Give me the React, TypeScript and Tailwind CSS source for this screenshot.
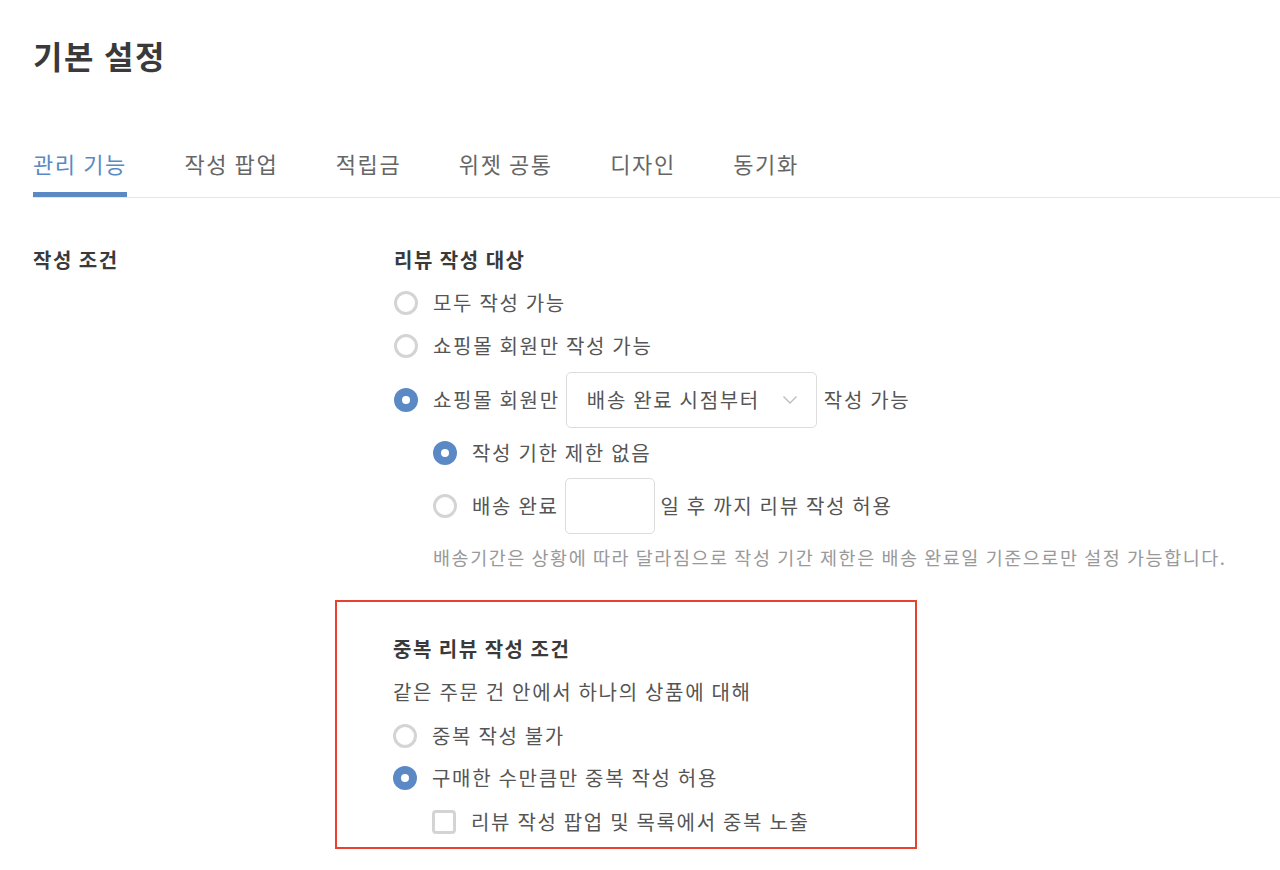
import React from "react";

const F = { fontFamily: '"Noto Sans CJK KR", "Noto Sans", sans-serif' };

function Radio({ checked }: { checked?: boolean }) {
  return checked ? (
    <span className="flex h-6 w-6 shrink-0 items-center justify-center rounded-full bg-[#5b89c6]">
      <span className="h-2 w-2 rounded-full bg-white" />
    </span>
  ) : (
    <span className="h-6 w-6 shrink-0 rounded-full border-[3px] border-[#d4d4d4] bg-white" />
  );
}

function Row({ checked, children, className = "" }: { checked?: boolean; children: React.ReactNode; className?: string }) {
  return (
    <div className={`flex items-center gap-[15px] ${className}`}>
      <Radio checked={checked} />
      <div className="flex items-center text-[20px] leading-[30px] tracking-[1.7px] text-[#555]">{children}</div>
    </div>
  );
}

export default function App() {
  const tabs = ["관리 기능", "작성 팝업", "적립금", "위젯 공통", "디자인", "동기화"];
  return (
    <div className="min-h-[870px] w-[1280px] bg-white pl-[33px]" style={F}>
      <h1 className="pt-[33px] text-[32px] font-bold leading-[44px] tracking-[1.6px] text-[#3a3a3a]">기본 설정</h1>

      <div className="mt-[71px] flex gap-[57.5px] border-b border-[#e6e6e6]">
        {tabs.map((t, i) => (
          <div
            key={t}
            className={`border-b-[5px] pb-[14px] text-[22px] leading-[30px] tracking-[1.6px] ${
              i === 0 ? "border-[#5b89c6] text-[#5b89c6]" : "border-transparent text-[#666]"
            }`}
          >
            {t}
          </div>
        ))}
      </div>

      <div className="mt-[47px] flex">
        <div className="w-[361px] shrink-0 text-[20px] font-bold leading-[30px] tracking-[1.5px] text-[#3a3a3a]">작성 조건</div>
        <div className="flex flex-col">
          <div className="text-[20px] font-bold leading-[30px] tracking-[1.5px] text-[#3a3a3a]">리뷰 작성 대상</div>
          <Row className="mt-[13px]">모두 작성 가능</Row>
          <Row className="mt-[13px]">쇼핑몰 회원만 작성 가능</Row>
          <Row checked className="mt-[11px]">
            <span>쇼핑몰 회원만</span>
            <div className="ml-[6px] mr-[7px] flex h-[56px] w-[251px] items-center justify-between rounded-[5px] border border-[#dcdcdc] pl-[20px] pr-[18px] text-[#555]">
              <span>배송 완료 시점부터</span>
              <svg width="16" height="10" viewBox="0 0 16 10" fill="none">
                <path d="M1.5 1.5 L8 8 L14.5 1.5" stroke="#bdbdbd" strokeWidth="1.4" />
              </svg>
            </div>
            <span>작성 가능</span>
          </Row>
          <div className="ml-[39px] flex flex-col">
            <Row checked className="mt-[10px]">작성 기한 제한 없음</Row>
            <Row className="mt-[10px]">
              <span>배송 완료</span>
              <div className="ml-[6px] mr-[6px] h-[56px] w-[90px] rounded-[5px] border border-[#dcdcdc]" />
              <span>일 후 까지 리뷰 작성 허용</span>
            </Row>
            <p className="mt-[10px] whitespace-nowrap text-[18.5px] leading-[26px] tracking-[1.55px] text-[#999]">
              배송기간은 상황에 따라 달라짐으로 작성 기간 제한은 배송 완료일 기준으로만 설정 가능합니다.
            </p>
          </div>

          <div className="-ml-[59px] mt-[30px] w-[582px] border-[2.5px] border-[#e9412f] pb-[10px] pl-[56px] pt-[32px]">
            <div className="text-[20px] font-bold leading-[30px] tracking-[1.5px] text-[#3a3a3a]">중복 리뷰 작성 조건</div>
            <div className="mt-[13px] text-[20px] leading-[30px] tracking-[1.7px] text-[#555]">같은 주문 건 안에서 하나의 상품에 대해</div>
            <Row className="mt-[14px]">중복 작성 불가</Row>
            <Row checked className="mt-[12px]">구매한 수만큼만 중복 작성 허용</Row>
            <div className="ml-[39px] mt-[14px] flex items-center gap-[15px]">
              <span className="h-6 w-6 shrink-0 rounded-[4px] border-[3px] border-[#d4d4d4]" />
              <span className="text-[20px] leading-[30px] tracking-[1.7px] text-[#555]">리뷰 작성 팝업 및 목록에서 중복 노출</span>
            </div>
          </div>
        </div>
      </div>
    </div>
  );
}
